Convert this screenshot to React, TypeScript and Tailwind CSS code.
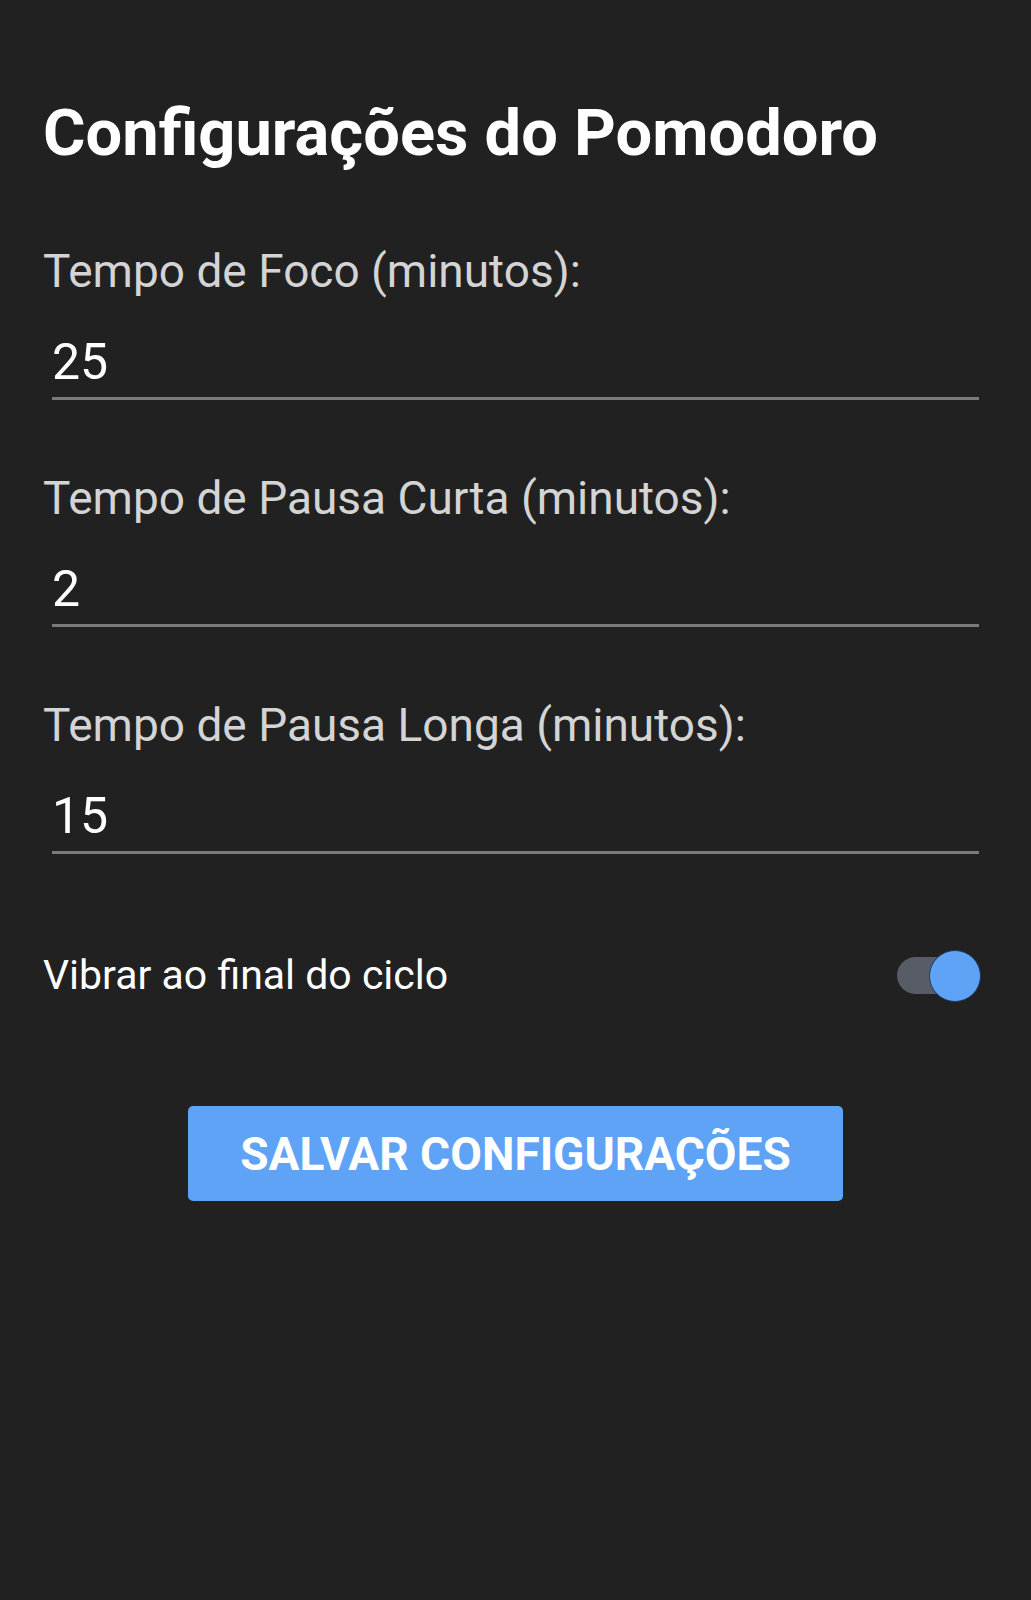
import { useState } from 'react'

const fields = [
  { label: 'Tempo de Foco (minutos):', value: '25' },
  { label: 'Tempo de Pausa Curta (minutos):', value: '2' },
  { label: 'Tempo de Pausa Longa (minutos):', value: '15' },
]

export default function App() {
  const [vibrate, setVibrate] = useState(true)

  return (
    <div className="min-h-[1600px] w-full bg-[#212121] px-[43px] pt-[101px] font-['Roboto',sans-serif]">
      <h1 className="text-[65px] font-bold leading-none text-white">Configurações do Pomodoro</h1>

      {fields.map((f, i) => (
        <div key={f.label} className={i === 0 ? 'mt-[82px]' : 'mt-[75px]'}>
          <div className="text-[46px] leading-none text-[#d4d4d4]">{f.label}</div>
          <div className="mx-[9px] mt-[43px] border-b-[3px] border-[#7a7a7a] pb-[10px]">
            <div className="text-[50px] leading-none text-white">{f.value}</div>
          </div>
        </div>
      ))}

      {/* vibrate toggle */}
      <div className="mt-[101px] mr-[9px] flex items-center justify-between">
        <span className="text-[41px] leading-none text-white">Vibrar ao final do ciclo</span>
        <button
          onClick={() => setVibrate(!vibrate)}
          className="relative h-[37px] w-[82px]"
          aria-label="Vibrar ao final do ciclo"
        >
          <span className={vibrate ? 'absolute inset-0 rounded-full bg-[#575c66]' : 'absolute inset-0 rounded-full bg-[#555]'} />
          <span
            className={
              vibrate
                ? 'absolute right-[-2px] top-1/2 h-[52px] w-[52px] -translate-y-1/2 rounded-full border border-[#1c3a5e] bg-[#5ea3f5]'
                : 'absolute left-[-2px] top-1/2 h-[52px] w-[52px] -translate-y-1/2 rounded-full bg-[#ececec]'
            }
          />
        </button>
      </div>

      <div className="mt-[110px] flex justify-center">
        <button className="h-[95px] w-[655px] rounded-[5px] bg-[#5ea3f5] text-[46px] font-bold uppercase leading-none text-white">
          Salvar Configurações
        </button>
      </div>
    </div>
  )
}
